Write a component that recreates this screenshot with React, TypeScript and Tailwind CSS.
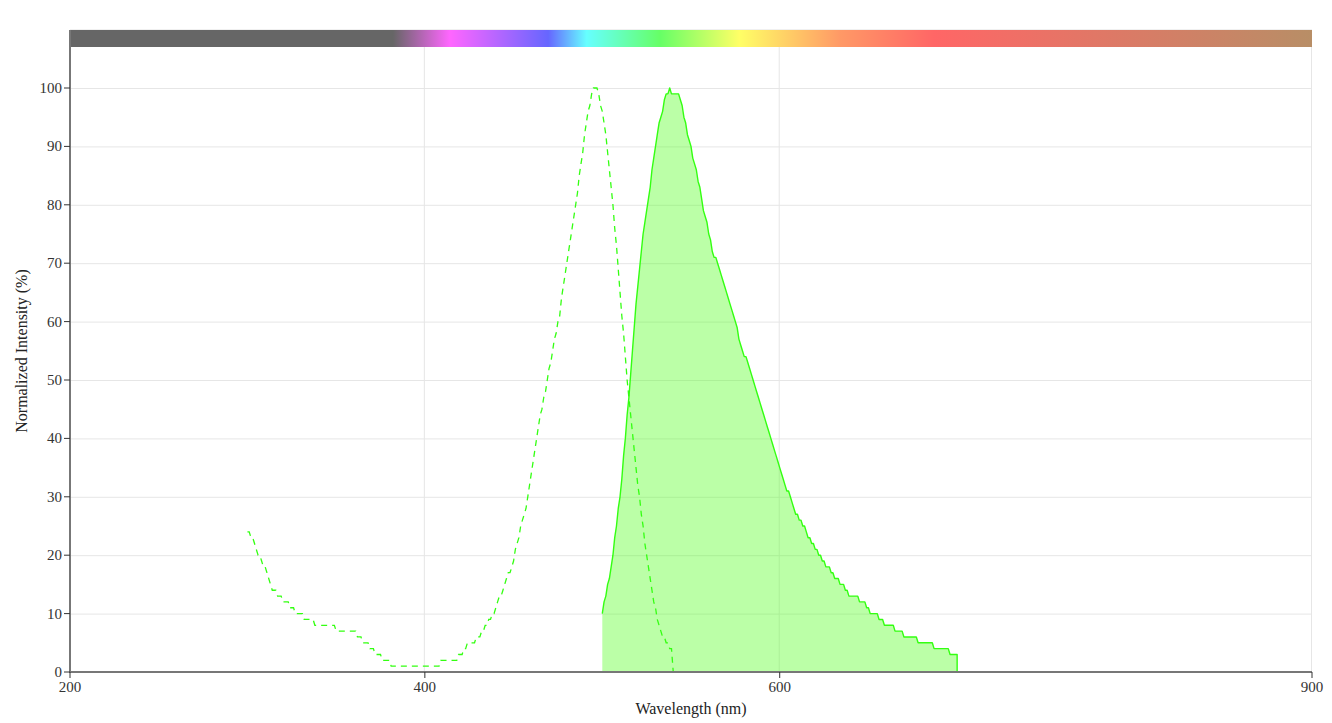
const W = 1332;
const H = 723;
const LEFT = 70;
const RIGHT = 1312;
const BOTTOM = 672;
const TOP_100 = 88;

const X = (nm: number) => LEFT + ((nm - 200) * (RIGHT - LEFT)) / 700;
const Y = (v: number) => BOTTOM - (v * (BOTTOM - TOP_100)) / 100;

type Pt = [number, number];

// rough key points read off the measured spectra, resampled at 1 nm and rounded
const excitationKeys: Pt[] = [
  [300, 24], [303, 22.6], [305, 21], [308, 19], [311, 17], [313.7, 14.6], [315.5, 14],
  [318, 13], [321, 12], [325, 11], [328.7, 10], [334, 9], [340, 8], [348, 8], [350, 7],
  [359.7, 7], [362.5, 6], [366, 5], [370, 4], [372.8, 3], [378.5, 2], [382, 1], [407.6, 1],
  [410.4, 2], [418, 2], [419.8, 3], [425.4, 5], [431, 6], [434.8, 8], [438.6, 10], [444, 14],
  [449.8, 19], [453.6, 24], [457.4, 29], [463, 40.3], [469.6, 51], [476, 61.4], [480, 70],
  [485.6, 81.4], [489.3, 90], [492, 96.2], [495, 100], [496.8, 100], [499.6, 96.8],
  [502.4, 91], [505.3, 82.5], [508, 72.8], [511, 61.4], [513.7, 50.9], [517.5, 39],
  [521.3, 28.9], [525, 19.7], [528.8, 12.3], [532.5, 7.2], [536.3, 4.9], [539, 4], [540, 0],
];

const emissionKeys: Pt[] = [
  [500, 10], [503.4, 15.2], [506.2, 20.9], [510, 30], [512.8, 39.7], [516, 51], [519.4, 64.3],
  [523.1, 75.7], [526.9, 83.1], [529.7, 90], [532.5, 94.5], [535.3, 98], [538, 100], [539, 99],
  [542.8, 99], [544.7, 97.4], [546.6, 94], [548.5, 91.7], [551.3, 87.7], [554.1, 84.2],
  [556, 80.8], [558.8, 76.8], [561.6, 72.8], [566.3, 68.3], [570, 64.8], [572, 62.6],
  [574.8, 60.3], [577.6, 56.3], [581.4, 53.4], [587, 48.3], [594, 40.5], [597.3, 38],
  [603, 32.3], [608.6, 27.7], [613.3, 24.9], [617, 22.9], [620.8, 20.9], [624.6, 18.9],
  [628.3, 17.7], [632, 15.8], [636.8, 14.6], [639, 13.4],
];

const emissionTail: [number, number, number][] = [
  [640, 644, 13], [645, 648, 12], [649, 650, 11], [651, 655, 10], [656, 658, 9],
  [659, 664, 8], [665, 669, 7], [670, 677, 6], [678, 686, 5], [687, 695, 4], [696, 700, 3],
];

function resample(keys: Pt[]): Pt[] {
  const out: Pt[] = [];
  const start = Math.ceil(keys[0][0]);
  const end = Math.floor(keys[keys.length - 1][0]);
  let i = 0;
  for (let nm = start; nm <= end; nm++) {
    while (i < keys.length - 2 && keys[i + 1][0] < nm) i++;
    const [x0, y0] = keys[i];
    const [x1, y1] = keys[i + 1];
    const t = x1 === x0 ? 0 : (nm - x0) / (x1 - x0);
    out.push([nm, Math.round(y0 + (y1 - y0) * Math.max(0, Math.min(1, t)))]);
  }
  return out;
}

const excitation = resample(excitationKeys);
const emission: Pt[] = [...resample(emissionKeys)];
emissionTail.forEach(([a, b, v]) => {
  for (let nm = a; nm <= b; nm++) emission.push([nm, v]);
});

const toPath = (pts: Pt[]) =>
  pts.map(([nm, v], i) => `${i === 0 ? "M" : "L"}${X(nm).toFixed(2)},${Y(v).toFixed(2)}`).join(" ");

const emissionLine = toPath([...emission, [700, 0]]);
const emissionArea = `${toPath([[500, 0], ...emission, [700, 0]])} Z`;
const excitationLine = toPath(excitation);

const yTicks = [0, 10, 20, 30, 40, 50, 60, 70, 80, 90, 100];
const xTicks = [200, 400, 600, 900];

const spectrumStops = [
  { at: 0, color: "#666666" },
  { at: 0.26, color: "#666666" },
  { at: 0.306, color: "#ff66ff" },
  { at: 0.385, color: "#6666ff" },
  { at: 0.416, color: "#66ffff" },
  { at: 0.475, color: "#66ff66" },
  { at: 0.539, color: "#ffff66" },
  { at: 0.62, color: "#ff9966" },
  { at: 0.696, color: "#ff6666" },
  { at: 1, color: "#b88e66" },
];

export default function App() {
  return (
    <div className="w-[1332px] h-[723px] bg-white overflow-hidden">
      <svg width={W} height={H} viewBox={`0 0 ${W} ${H}`} className="block" style={{ fontFamily: '"Liberation Serif", "Times New Roman", serif' }}>
        <defs>
          <linearGradient id="spectrum" x1="0" x2="1" y1="0" y2="0">
            {spectrumStops.map((s) => (
              <stop key={s.at} offset={s.at} stopColor={s.color} />
            ))}
          </linearGradient>
        </defs>

        {/* grid */}
        {yTicks.slice(1).map((v) => (
          <line key={v} x1={LEFT} x2={RIGHT} y1={Y(v) + 0.5} y2={Y(v) + 0.5} stroke="#e6e6e6" strokeWidth={1} />
        ))}
        {[400, 600, 900].map((nm) => (
          <line key={nm} x1={X(nm) - 0.5} x2={X(nm) - 0.5} y1={30} y2={BOTTOM} stroke="#e6e6e6" strokeWidth={1} />
        ))}

        {/* spectrum bar */}
        <line x1={LEFT} x2={RIGHT} y1={29.5} y2={29.5} stroke="#f0f0f0" strokeWidth={1} />
        <rect x={LEFT} y={30} width={RIGHT - LEFT} height={17} fill="url(#spectrum)" />

        {/* emission */}
        <path d={emissionArea} fill="#55ff22" fillOpacity={0.4} stroke="none" />
        <path d={emissionLine} fill="none" stroke="#33ff11" strokeWidth={1.4} strokeLinejoin="round" />

        {/* excitation */}
        <path d={excitationLine} fill="none" stroke="#33ff11" strokeWidth={1.3} strokeDasharray="6,5" />

        {/* axes */}
        <line x1={LEFT} x2={LEFT} y1={30} y2={BOTTOM + 1} stroke="#777777" strokeWidth={2} />
        <line x1={LEFT - 1} x2={RIGHT} y1={BOTTOM} y2={BOTTOM} stroke="#777777" strokeWidth={2} />

        {yTicks.map((v) => (
          <g key={v}>
            <line x1={LEFT - 6} x2={LEFT} y1={Y(v)} y2={Y(v)} stroke="#333333" strokeWidth={1} />
            <text x={LEFT - 8} y={Y(v) + 5} textAnchor="end" fontSize={15} fill="#333333">
              {v}
            </text>
          </g>
        ))}
        {xTicks.map((nm) => (
          <g key={nm}>
            <line x1={X(nm)} x2={X(nm)} y1={BOTTOM} y2={BOTTOM + 6} stroke="#333333" strokeWidth={1} />
            <text x={X(nm)} y={692} textAnchor="middle" fontSize={15} fill="#333333">
              {nm}
            </text>
          </g>
        ))}

        <text x={691} y={714} textAnchor="middle" fontSize={16} fill="#222222">
          Wavelength (nm)
        </text>
        <text x={27} y={351} textAnchor="middle" fontSize={16} fill="#222222" transform="rotate(-90 27 351)">
          Normalized Intensity (%)
        </text>
      </svg>
    </div>
  );
}
